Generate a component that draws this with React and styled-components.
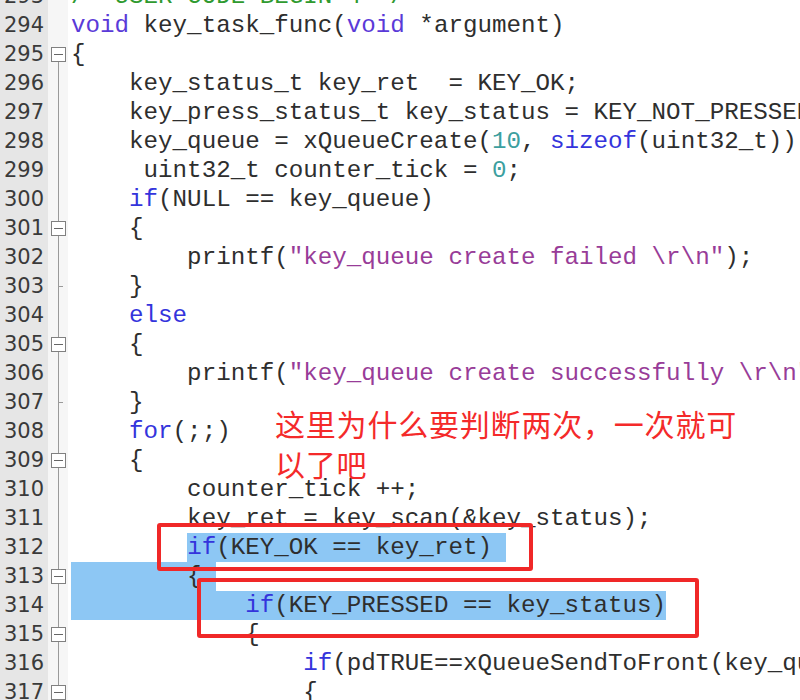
import React from "react";
import styled, { createGlobalStyle } from "styled-components";

const GlobalStyle = createGlobalStyle`
  html, body { margin: 0; padding: 0; background: #ffffff; overflow: hidden; }
`;

const ROW_H = 29;

const Editor = styled.div`
  position: relative;
  width: 800px;
  height: 700px;
  overflow: hidden;
  background: #ffffff;
`;

const Lines = styled.div`
  display: flex;
  flex-direction: column;
  margin-top: -18px;
`;

const Row = styled.div`
  display: flex;
  height: ${ROW_H}px;
`;

const LineNo = styled.div`
  flex: 0 0 48px;
  background: #e6e6e6;
  color: #3a3a3a;
  font-family: "DejaVu Sans", Verdana, sans-serif;
  font-size: 21px;
  line-height: ${ROW_H}px;
  text-align: right;
  padding-right: 4px;
  box-sizing: border-box;
`;

const Fold = styled.div`
  position: relative;
  flex: 0 0 20px;
  background: #f6f6f6;
  margin-right: 3px;

  &::before {
    content: "";
    display: ${(p) => (p.$line ? "block" : "none")};
    position: absolute;
    left: 10px;
    top: ${(p) => (p.$line === "start" ? "50%" : "0")};
    bottom: 0;
    width: 1px;
    background: #9a9a9a;
  }

  &::after {
    content: "";
    display: ${(p) => (p.$tick ? "block" : "none")};
    position: absolute;
    left: 10px;
    top: 14px;
    width: 5px;
    height: 1px;
    background: #9a9a9a;
  }
`;

const FoldBox = styled.span`
  position: absolute;
  left: 3px;
  top: 7px;
  width: 15px;
  height: 15px;
  box-sizing: border-box;
  border: 1px solid #808080;
  background: #ffffff;
  z-index: 1;
  display: flex;
  align-items: center;
  justify-content: center;

  &::before {
    content: "";
    width: 9px;
    height: 1px;
    background: #666;
  }
`;

const Code = styled.div`
  flex: 1 1 auto;
  white-space: pre;
  font-family: "Liberation Mono", "Courier New", monospace;
  font-size: 24.2px;
  line-height: ${ROW_H}px;
  color: #2e2e2e;
  overflow: hidden;
`;

const COLORS = {
  k: "#3434dc",
  t: "#5a3ad8",
  n: "#3d9f9f",
  s: "#983c98",
  c: "#2f9a2f",
};

const Tok = styled.span`
  color: ${(p) => COLORS[p.$kind] || "inherit"};
`;

const Sel = styled.span`
  display: inline-block;
  height: ${ROW_H}px;
  vertical-align: top;
  background: #8dc7f4;
`;

const RedBox = styled.div`
  position: absolute;
  left: ${(p) => p.$x}px;
  top: ${(p) => p.$y}px;
  width: ${(p) => p.$w}px;
  height: ${(p) => p.$h}px;
  border: 4px solid #f02828;
  border-radius: 3px;
  box-sizing: border-box;
`;

const Note = styled.div`
  position: absolute;
  left: 275px;
  top: 403px;
  width: 475px;
  font-family: "Noto Sans CJK SC", "Noto Sans", sans-serif;
  font-size: 30px;
  letter-spacing: 0.8px;
  line-height: 40px;
  color: #f42a2a;
`;

const lines = [
  { n: 293, segs: [["/* USER CODE BEGIN 4 */", "c"]] },
  { n: 294, segs: [["void", "t"], [" key_task_func("], ["void", "t"], [" *argument)"]] },
  { n: 295, fold: "box", segs: [["{"]] },
  { n: 296, segs: [["    key_status_t key_ret  = KEY_OK;"]] },
  { n: 297, segs: [["    key_press_status_t key_status = KEY_NOT_PRESSED;"]] },
  { n: 298, segs: [["    key_queue = xQueueCreate("], ["10", "n"], [", "], ["sizeof", "k"], ["(uint32_t));"]] },
  { n: 299, segs: [["     uint32_t counter_tick = "], ["0", "n"], [";"]] },
  { n: 300, segs: [["    "], ["if", "k"], ["(NULL == key_queue)"]] },
  { n: 301, fold: "box", segs: [["    {"]] },
  { n: 302, segs: [["        printf("], ["\"key_queue create failed \\r\\n\"", "s"], [");"]] },
  { n: 303, tick: true, segs: [["    }"]] },
  { n: 304, segs: [["    "], ["else", "k"]] },
  { n: 305, fold: "box", segs: [["    {"]] },
  { n: 306, segs: [["        printf("], ["\"key_queue create successfully \\r\\n\"", "s"], [");"]] },
  { n: 307, tick: true, segs: [["    }"]] },
  { n: 308, segs: [["    "], ["for", "k"], ["(;;)"]] },
  { n: 309, fold: "box", segs: [["    {"]] },
  { n: 310, segs: [["        counter_tick ++;"]] },
  { n: 311, segs: [["        key_ret = key_scan(&key_status);"]] },
  {
    n: 312,
    pre: "        ",
    sel: [["if", "k"], ["(KEY_OK == key_ret) "]],
    segs: [],
  },
  { n: 313, fold: "box", pre: "", sel: [["        { "]], segs: [] },
  {
    n: 314,
    pre: "",
    sel: [["            "], ["if", "k"], ["(KEY_PRESSED == key_status)"]],
    segs: [],
  },
  { n: 315, fold: "box", segs: [["            {"]] },
  { n: 316, segs: [["                "], ["if", "k"], ["(pdTRUE==xQueueSendToFront(key_queue, &key_status, 0))"]] },
  { n: 317, fold: "box", segs: [["                {"]] },
  { n: 318, segs: [["                    "]] },
];

const renderSegs = (segs) =>
  segs.map(([text, kind], i) => (
    <Tok key={i} $kind={kind}>
      {text}
    </Tok>
  ));

export default function App() {
  return (
    <>
      <GlobalStyle />
      <Editor>
        <Lines>
          {lines.map((l) => {
            const line = l.n < 295 ? null : l.n === 295 ? "start" : "full";
            return (
              <Row key={l.n}>
                <LineNo>{l.n}</LineNo>
                <Fold $line={line} $tick={l.tick}>
                  {l.fold === "box" && <FoldBox />}
                </Fold>
                <Code>
                  {l.sel ? (
                    <>
                      {l.pre}
                      <Sel>{renderSegs(l.sel)}</Sel>
                    </>
                  ) : (
                    renderSegs(l.segs)
                  )}
                </Code>
              </Row>
            );
          })}
        </Lines>
        <Note>这里为什么要判断两次，一次就可以了吧</Note>
        <RedBox $x={157} $y={523} $w={376} $h={48} />
        <RedBox $x={197} $y={578} $w={502} $h={60} />
      </Editor>
    </>
  );
}
